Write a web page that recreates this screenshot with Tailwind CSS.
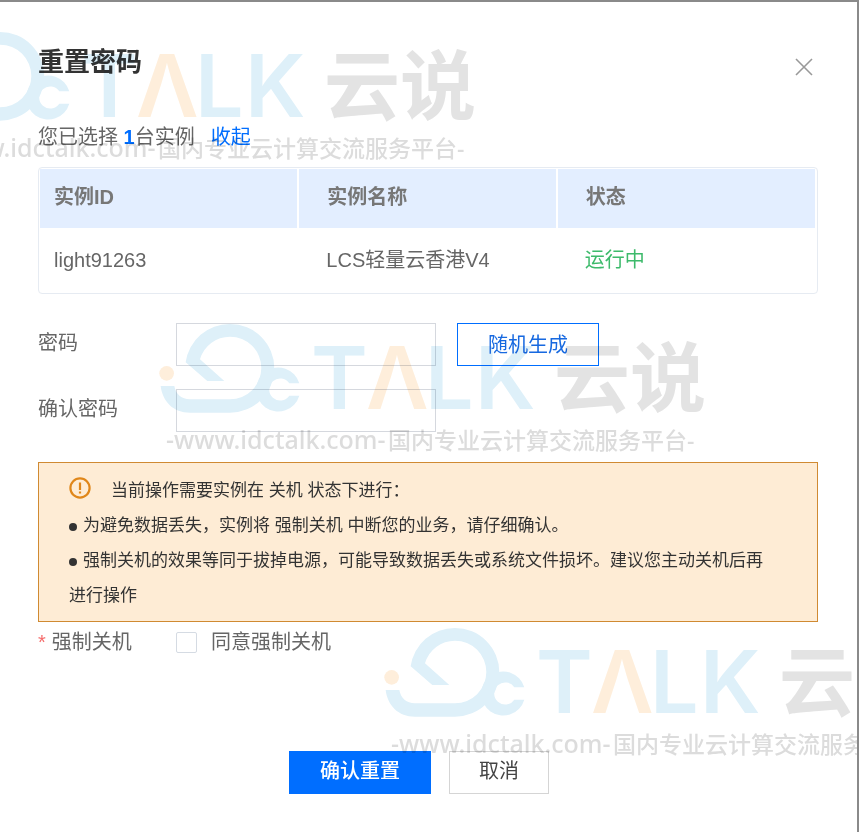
<!DOCTYPE html>
<html lang="zh-CN">

<head>
  <meta charset="UTF-8" />
  <meta name="viewport" content="width=device-width, initial-scale=1.0" />
  <script src="https://cdn.jsdelivr.net/npm/@tailwindcss/browser@4"></script>
  <title>重置密码</title>
</head>

<body class="bg-white font-['Liberation_Sans','Noto_Sans_CJK_SC',sans-serif] text-[20px] leading-[30px] text-[#666]">
  <main class="relative min-h-screen overflow-hidden border-t-2 border-r-2 border-[#8a8a8a] pt-[43px] pr-[39px] pb-[38px] pl-[38px]">

    <!-- Header -->
    <header class="flex items-start justify-between">
      <h1 class="text-[26px] leading-[34px] font-bold text-[#333]">重置密码</h1>
      <button type="button" aria-label="关闭" class="mt-2 p-1">
        <svg class="size-5" viewBox="0 0 20 20" fill="none" stroke="#999" stroke-width="1.6">
          <path d="M2 2l16 16M18 2L2 18" />
        </svg>
      </button>
    </header>

    <p class="mt-[41px]">您已选择 <b class="text-[#006eff]">1</b>台实例<a href="#" class="ml-4 text-[#006eff]">收起</a></p>

    <!-- Instance table -->
    <div class="mt-[15px] rounded border border-[#e6ebf2] p-px pr-0.5">
      <table class="w-full table-fixed text-left">
        <thead>
          <tr class="h-[59px] bg-[#e3eeff] text-[#777]">
            <th class="w-1/3 border-r-2 border-white px-3.5 pb-1 font-bold">实例ID</th>
            <th class="w-1/3 border-r-2 border-white px-7 pb-1 font-bold">实例名称</th>
            <th class="w-1/3 px-7 pb-1 font-bold">状态</th>
          </tr>
        </thead>
        <tbody>
          <tr class="h-[64px]">
            <td class="px-3.5">light91263</td>
            <td class="px-7">LCS轻量云香港V4</td>
            <td class="px-7 text-[#3dba6b]">运行中</td>
          </tr>
        </tbody>
      </table>
    </div>

    <form>
      <!-- Password fields -->
      <div class="mt-[29px] flex items-center">
        <label for="password" class="w-[138px] pb-1">密码</label>
        <input id="password" type="password" class="h-[43px] w-[260px] border border-[#d5d8de]" />
        <button type="button" class="ml-[21px] h-[43px] w-[142px] border border-[#006eff] text-[#1769e0]">随机生成</button>
      </div>
      <div class="mt-[23px] flex items-center">
        <label for="confirm" class="w-[138px] pb-1">确认密码</label>
        <input id="confirm" type="password" class="h-[43px] w-[260px] border border-[#d5d8de]" />
      </div>

      <!-- Warning -->
      <div class="mt-[30px] border border-[#d08a32] bg-[#feecd5] pt-[10px] pr-10 pb-2 pl-[30px] text-[17px] leading-[35px] text-[#333]">
        <div class="flex items-start gap-5">
          <svg class="mt-1 size-[22px]" viewBox="0 0 22 22" fill="none" stroke="#e0871a" stroke-width="2.2">
            <circle cx="11" cy="11" r="9.6" />
            <path d="M11 5.5v7.5M11 14.5v2" />
          </svg>
          <p>当前操作需要实例在 关机 状态下进行：</p>
        </div>
        <p><span class="mr-1.5 inline-block size-2 rounded-full bg-[#333]"></span>为避免数据丢失，实例将 强制关机 中断您的业务，请仔细确认。</p>
        <p><span class="mr-1.5 inline-block size-2 rounded-full bg-[#333]"></span>强制关机的效果等同于拔掉电源，可能导致数据丢失或系统文件损坏。建议您主动关机后再进行操作</p>
      </div>

      <div class="mt-[5px] flex items-center">
        <span class="w-[138px]"><span class="mr-1.5 text-[#f56c6c]">*</span>强制关机</span>
        <input id="agree" type="checkbox" class="size-[21px] appearance-none rounded-xs border border-[#d5dbe3] checked:bg-[#006eff]" />
        <label for="agree" class="ml-3.5">同意强制关机</label>
      </div>

      <!-- Actions -->
      <div class="mt-[94px] flex justify-center gap-[18px] pr-[18px]">
        <button type="submit" class="h-[43px] w-[142px] bg-[#006eff] pb-1 font-medium text-white">确认重置</button>
        <button type="button" class="h-[43px] w-[100px] border border-[#d5d5d5] pb-1 text-[#444]">取消</button>
      </div>
    </form>

    <!-- Watermark -->
    <svg class="pointer-events-none absolute inset-0 h-full w-full mix-blend-multiply" aria-hidden="true">
      <defs>
        <g id="mark">
          <g transform="translate(-140 -24) scale(0.3333)" fill="#def0f9">
            <path d="M422 258H463C467 282 485 298 510 298H630A94 94 0 0 0 630 110A94 94 0 0 0 540 178L613 243H562L497 187A133 133 0 0 1 630 72A133 133 0 0 1 630 338H510C460 338 428 305 422 258Z" />
            <path d="M838 250A66 66 0 1 0 838 287H808A33 33 0 1 1 808 250Z" />
            <circle cx="440" cy="220" r="22" fill="#feeedb" />
          </g>
          <g class="font-['Inter',sans-serif] text-[86px] font-semibold" fill="#def0f9">
            <text x="151" y="85">T</text>
            <text x="206" y="85" fill="#feeedb">Λ</text>
            <text x="265" y="85">L</text>
            <text x="315" y="85">K</text>
          </g>
          <text x="394" y="82" fill="#e3e3e3" class="font-['Noto_Sans_CJK_SC',sans-serif] text-[76px] font-bold">云说</text>
          <g class="font-['Noto_Sans','Noto_Sans_CJK_SC',sans-serif] font-medium" fill="#dcdcdc">
            <text x="6" y="125" class="text-[25px]">-www.idctalk.com-</text>
            <text x="228" y="125" class="text-[23px]">国内专业云计算交流服务平台-</text>
          </g>
        </g>
      </defs>
      <use href="#mark" x="-70" y="30" />
      <use href="#mark" x="160" y="322" />
      <use href="#mark" x="385" y="626" />
    </svg>
  </main>
</body>

</html>
